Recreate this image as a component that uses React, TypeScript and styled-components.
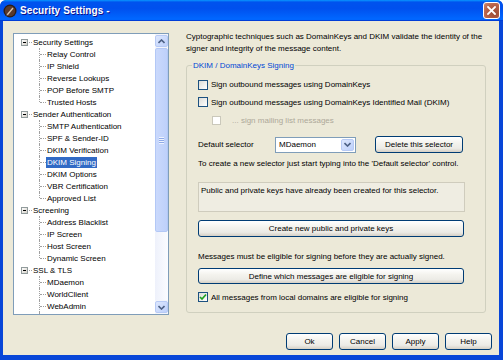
import React from "react";
import styled, { createGlobalStyle } from "styled-components";

const GlobalStyle = createGlobalStyle`
  html, body {
    margin: 0;
    padding: 0;
    background: #ffffff;
  }
  body {
    font-family: "Liberation Sans", Arial, sans-serif;
    font-size: 8px;
    color: #000;
  }
`;

type TreeNode = { label: string; children?: string[] };

const tree: TreeNode[] = [
  {
    label: "Security Settings",
    children: ["Relay Control", "IP Shield", "Reverse Lookups", "POP Before SMTP", "Trusted Hosts"],
  },
  {
    label: "Sender Authentication",
    children: [
      "SMTP Authentication",
      "SPF & Sender-ID",
      "DKIM Verification",
      "DKIM Signing",
      "DKIM Options",
      "VBR Certification",
      "Approved List",
    ],
  },
  {
    label: "Screening",
    children: ["Address Blacklist", "IP Screen", "Host Screen", "Dynamic Screen"],
  },
  {
    label: "SSL & TLS",
    children: ["MDaemon", "WorldClient", "WebAdmin", "Web Services"],
  },
];

const SELECTED = "DKIM Signing";

const App: React.FC = () => {
  return (
    <>
      <GlobalStyle />
      <Window>
        <TitleBar>
          <TitleIcon viewBox="0 0 14 14">
            <circle cx="7" cy="7" r="6.5" fill="#2b1d18" />
            <circle cx="7" cy="7" r="5.2" fill="#5a3a2c" />
            <path d="M4 10 L9.5 3.5 L10.5 4.5 L5 11 Z" fill="#d9c7b0" />
            <path d="M4 10 L3.5 11.5 L5 11 Z" fill="#f2e6d4" />
          </TitleIcon>
          <TitleText>Security Settings -</TitleText>
          <CloseButton>
            <svg width="9" height="9" viewBox="0 0 9 9">
              <path d="M1 1 L8 8 M8 1 L1 8" stroke="#fff" strokeWidth="1.8" strokeLinecap="square" />
            </svg>
          </CloseButton>
        </TitleBar>

        <Content>
          <MainRow>
            <TreeBox>
              <TreeList>
                {tree.map((node) => (
                  <div key={node.label}>
                    <ParentRow>
                      <Expander>
                        <span />
                      </Expander>
                      <ParentLabel>{node.label}</ParentLabel>
                    </ParentRow>
                    <ChildGroup>
                      {node.children?.map((c, i) => (
                        <ChildRow key={c} $last={i === (node.children?.length ?? 0) - 1}>
                          <ChildLabel $selected={c === SELECTED}>{c}</ChildLabel>
                        </ChildRow>
                      ))}
                    </ChildGroup>
                  </div>
                ))}
              </TreeList>
              <ScrollBar>
                <ScrollButton>
                  <svg width="7" height="5" viewBox="0 0 7 5">
                    <path d="M0.5 4 L3.5 1 L6.5 4" stroke="#4d6185" strokeWidth="1.6" fill="none" />
                  </svg>
                </ScrollButton>
                <ScrollTrack>
                  <ScrollThumb>
                    <Grip />
                  </ScrollThumb>
                </ScrollTrack>
                <ScrollButton>
                  <svg width="7" height="5" viewBox="0 0 7 5">
                    <path d="M0.5 1 L3.5 4 L6.5 1" stroke="#4d6185" strokeWidth="1.6" fill="none" />
                  </svg>
                </ScrollButton>
              </ScrollBar>
            </TreeBox>

            <RightPane>
              <Intro>
                Cyptographic techniques such as DomainKeys and DKIM validate the identity of the
                <br />
                signer and integrity of the message content.
              </Intro>

              <GroupBox>
                <Legend>DKIM / DomainKeys Signing</Legend>

                <CheckRow $mt={13}>
                  <CheckBox />
                  <span>Sign outbound messages using DomainKeys</span>
                </CheckRow>
                <CheckRow $mt={6}>
                  <CheckBox />
                  <span>Sign outbound messages using DomainKeys Identified Mail (DKIM)</span>
                </CheckRow>
                <CheckRow $mt={6} $indent={14} $disabled>
                  <CheckBox $disabled />
                  <span>... sign mailing list messages</span>
                </CheckRow>

                <SelectorRow>
                  <SelectorLabel>Default selector</SelectorLabel>
                  <Combo>
                    <span>MDaemon</span>
                    <ComboButton>
                      <svg width="7" height="5" viewBox="0 0 7 5">
                        <path d="M0.5 1 L3.5 4 L6.5 1" stroke="#4d6185" strokeWidth="1.6" fill="none" />
                      </svg>
                    </ComboButton>
                  </Combo>
                  <Button $width={88}>Delete this selector</Button>
                </SelectorRow>

                <Note $mt={5}>To create a new selector just start typing into the 'Default selector' control.</Note>

                <ReadOnlyBox>Public and private keys have already been created for this selector.</ReadOnlyBox>

                <WideButton $mt={8}>Create new public and private keys</WideButton>

                <Note $mt={14}>Messages must be eligible for signing before they are actually signed.</Note>

                <WideButton $mt={5}>Define which messages are eligible for signing</WideButton>

                <CheckRow $mt={7}>
                  <CheckBox $checked>
                    <svg width="8" height="8" viewBox="0 0 8 8">
                      <path d="M1 4 L3 6 L7 1.5" stroke="#21a121" strokeWidth="1.7" fill="none" />
                    </svg>
                  </CheckBox>
                  <span>All messages from local domains are eligible for signing</span>
                </CheckRow>
              </GroupBox>
            </RightPane>
          </MainRow>

          <Footer>
            <Button $width={47}>Ok</Button>
            <Button $width={47}>Cancel</Button>
            <Button $width={47}>Apply</Button>
            <Button $width={47}>Help</Button>
          </Footer>
        </Content>
      </Window>
    </>
  );
};

const Window = styled.div`
  width: 503px;
  height: 360px;
  box-sizing: border-box;
  display: flex;
  flex-direction: column;
  background: #0846d8;
  padding: 0 4px 5px 3px;
  border-radius: 6px 6px 0 0;
  overflow: hidden;
`;

const TitleBar = styled.div`
  height: 21px;
  margin: 0 -4px 0 -3px;
  padding: 0 3px 0 3px;
  display: flex;
  align-items: center;
  background: linear-gradient(
    180deg,
    #0997ff 0%,
    #0053ee 10%,
    #0050ee 40%,
    #0066ff 88%,
    #0066ff 93%,
    #005bff 95%,
    #003dd7 97%,
    #003dd7 100%
  );
  border-radius: 6px 6px 0 0;
`;

const TitleIcon = styled.svg`
  width: 14px;
  height: 14px;
  margin-right: 3px;
`;

const TitleText = styled.div`
  flex: 1;
  color: #fff;
  font-weight: bold;
  font-size: 10px;
  text-shadow: 1px 1px #0f1089;
  letter-spacing: 0.1px;
`;

const CloseButton = styled.div`
  width: 15px;
  height: 15px;
  margin-right: 0px;
  border: 1px solid #fff;
  border-radius: 3px;
  background: radial-gradient(circle at 70% 70%, #9c4a33 0%, #b8634a 60%, #cf8b73 100%);
  display: flex;
  align-items: center;
  justify-content: center;
`;

const Content = styled.div`
  flex: 1;
  display: flex;
  flex-direction: column;
  background: #ece9d8;
  padding: 10px 7px 5px 10px;
`;

const MainRow = styled.div`
  display: flex;
  align-items: flex-start;
  gap: 17px;
`;

const TreeBox = styled.div`
  margin-top: 2px;
  width: 156px;
  height: 282px;
  box-sizing: border-box;
  border: 1px solid #7f9db9;
  background: #fff;
  display: flex;
  overflow: hidden;
`;

const TreeList = styled.div`
  flex: 1;
  padding-top: 2px;
  overflow: hidden;
`;

const ParentRow = styled.div`
  height: 12px;
  display: flex;
  align-items: center;
  padding-left: 7px;
`;

const Expander = styled.div`
  width: 7px;
  height: 7px;
  box-sizing: border-box;
  border: 1px solid #919b9c;
  background: linear-gradient(135deg, #fff, #d4d0c8);
  position: relative;
  display: flex;
  align-items: center;
  justify-content: center;
  span {
    width: 3px;
    height: 1px;
    background: #000;
  }
  &::after {
    content: "";
    position: absolute;
    left: 7px;
    top: 2px;
    width: 3px;
    border-top: 1px dotted #a0a0a0;
  }
`;

const ParentLabel = styled.span`
  margin-left: 5px;
  white-space: nowrap;
`;

const ChildGroup = styled.div`
  padding-left: 25px;
`;

const ChildRow = styled.div<{ $last?: boolean }>`
  height: 12px;
  display: flex;
  align-items: center;
  position: relative;
  padding-left: 7px;
  &::before {
    content: "";
    position: absolute;
    left: 1px;
    top: 6px;
    width: 6px;
    border-top: 1px dotted #a0a0a0;
  }
  &::after {
    content: "";
    position: absolute;
    left: 0;
    top: 0;
    height: ${(p) => (p.$last ? "6px" : "12px")};
    border-left: 1px dotted #a0a0a0;
  }
`;

const ChildLabel = styled.span<{ $selected?: boolean }>`
  white-space: nowrap;
  padding: 1px 1px;
  line-height: 9px;
  background: ${(p) => (p.$selected ? "#316ac5" : "transparent")};
  color: ${(p) => (p.$selected ? "#fff" : "#000")};
`;

const ScrollBar = styled.div`
  width: 13px;
  display: flex;
  flex-direction: column;
  background: #f3f5fb;
`;

const ScrollButton = styled.div`
  height: 12px;
  box-sizing: border-box;
  margin: 1px 0;
  border: 1px solid #b7caf5;
  border-radius: 2px;
  background: linear-gradient(135deg, #dde7fd, #bdd0fb);
  display: flex;
  align-items: center;
  justify-content: center;
`;

const ScrollTrack = styled.div`
  flex: 1;
  display: flex;
  flex-direction: column;
  background: linear-gradient(90deg, #eef1fb, #fbfcff);
`;

const ScrollThumb = styled.div`
  height: 184px;
  box-sizing: border-box;
  border: 1px solid #b3c8f6;
  border-radius: 2px;
  background: linear-gradient(90deg, #cad9fc, #bed0fb);
  display: flex;
  align-items: center;
  justify-content: center;
`;

const Grip = styled.div`
  width: 5px;
  height: 7px;
  background: repeating-linear-gradient(180deg, #eef3fe 0 1px, #8faae8 1px 2px);
`;

const RightPane = styled.div`
  width: 300px;
  display: flex;
  flex-direction: column;
`;

const Intro = styled.div`
  line-height: 12px;
  white-space: nowrap;
`;

const GroupBox = styled.div`
  margin-top: 10px;
  position: relative;
  border: 1px solid #d0d0bf;
  border-radius: 3px;
  padding: 0 0 9px 11px;
  display: flex;
  flex-direction: column;
  height: 248px;
  box-sizing: border-box;
`;

const Legend = styled.div`
  position: absolute;
  top: -6px;
  left: 5px;
  padding: 0 1px;
  background: #ece9d8;
  color: #0046d5;
  line-height: 12px;
`;

const CheckRow = styled.div<{ $mt?: number; $indent?: number; $disabled?: boolean }>`
  margin-top: ${(p) => p.$mt ?? 0}px;
  margin-left: ${(p) => p.$indent ?? 0}px;
  height: 12px;
  display: flex;
  align-items: center;
  gap: ${(p) => (p.$disabled ? 11 : 3)}px;
  color: ${(p) => (p.$disabled ? "#aca899" : "#000")};
  white-space: nowrap;
`;

const CheckBox = styled.div<{ $checked?: boolean; $disabled?: boolean }>`
  width: ${(p) => (p.$disabled ? 9 : 10)}px;
  height: ${(p) => (p.$disabled ? 9 : 10)}px;
  box-sizing: border-box;
  border: 1px solid ${(p) => (p.$disabled ? "#cac8bb" : "#1c5180")};
  background: ${(p) => (p.$disabled ? "#fff" : "linear-gradient(135deg, #dcdcd7, #fff)")};
  display: flex;
  align-items: center;
  justify-content: center;
  flex: none;
`;

const SelectorRow = styled.div`
  margin-top: 11px;
  height: 16px;
  display: flex;
  align-items: center;
`;

const SelectorLabel = styled.span`
  width: 77px;
`;

const Combo = styled.div`
  width: 81px;
  height: 16px;
  box-sizing: border-box;
  border: 1px solid #7f9db9;
  background: #fff;
  display: flex;
  align-items: center;
  justify-content: space-between;
  padding-left: 3px;
  margin-right: 19px;
`;

const ComboButton = styled.div`
  width: 13px;
  height: 12px;
  margin-right: 1px;
  box-sizing: border-box;
  border: 1px solid #b7caf5;
  border-radius: 2px;
  background: linear-gradient(135deg, #dde7fd, #bdd0fb);
  display: flex;
  align-items: center;
  justify-content: center;
`;

const Button = styled.div<{ $width?: number }>`
  width: ${(p) => p.$width ?? 75}px;
  height: 17px;
  box-sizing: border-box;
  border: 1px solid #003c74;
  border-radius: 3px;
  background: linear-gradient(180deg, #ffffff 0%, #f4f3ee 40%, #ecebe6 75%, #d6d0c5 100%);
  display: flex;
  align-items: center;
  justify-content: center;
  white-space: nowrap;
`;

const WideButton = styled(Button)<{ $mt?: number }>`
  width: 266px;
  margin-top: ${(p) => p.$mt ?? 0}px;
`;

const Note = styled.div<{ $mt?: number }>`
  margin-top: ${(p) => p.$mt ?? 0}px;
  line-height: 12px;
  white-space: nowrap;
`;

const ReadOnlyBox = styled.div`
  margin-top: 12px;
  width: 267px;
  height: 31px;
  box-sizing: border-box;
  border: 1px solid #cfccbd;
  background: #efede2;
  padding: 2px 2px;
  line-height: 11px;
`;

const Footer = styled.div`
  margin-top: auto;
  display: flex;
  justify-content: flex-end;
  gap: 6px;
`;

export default App;
